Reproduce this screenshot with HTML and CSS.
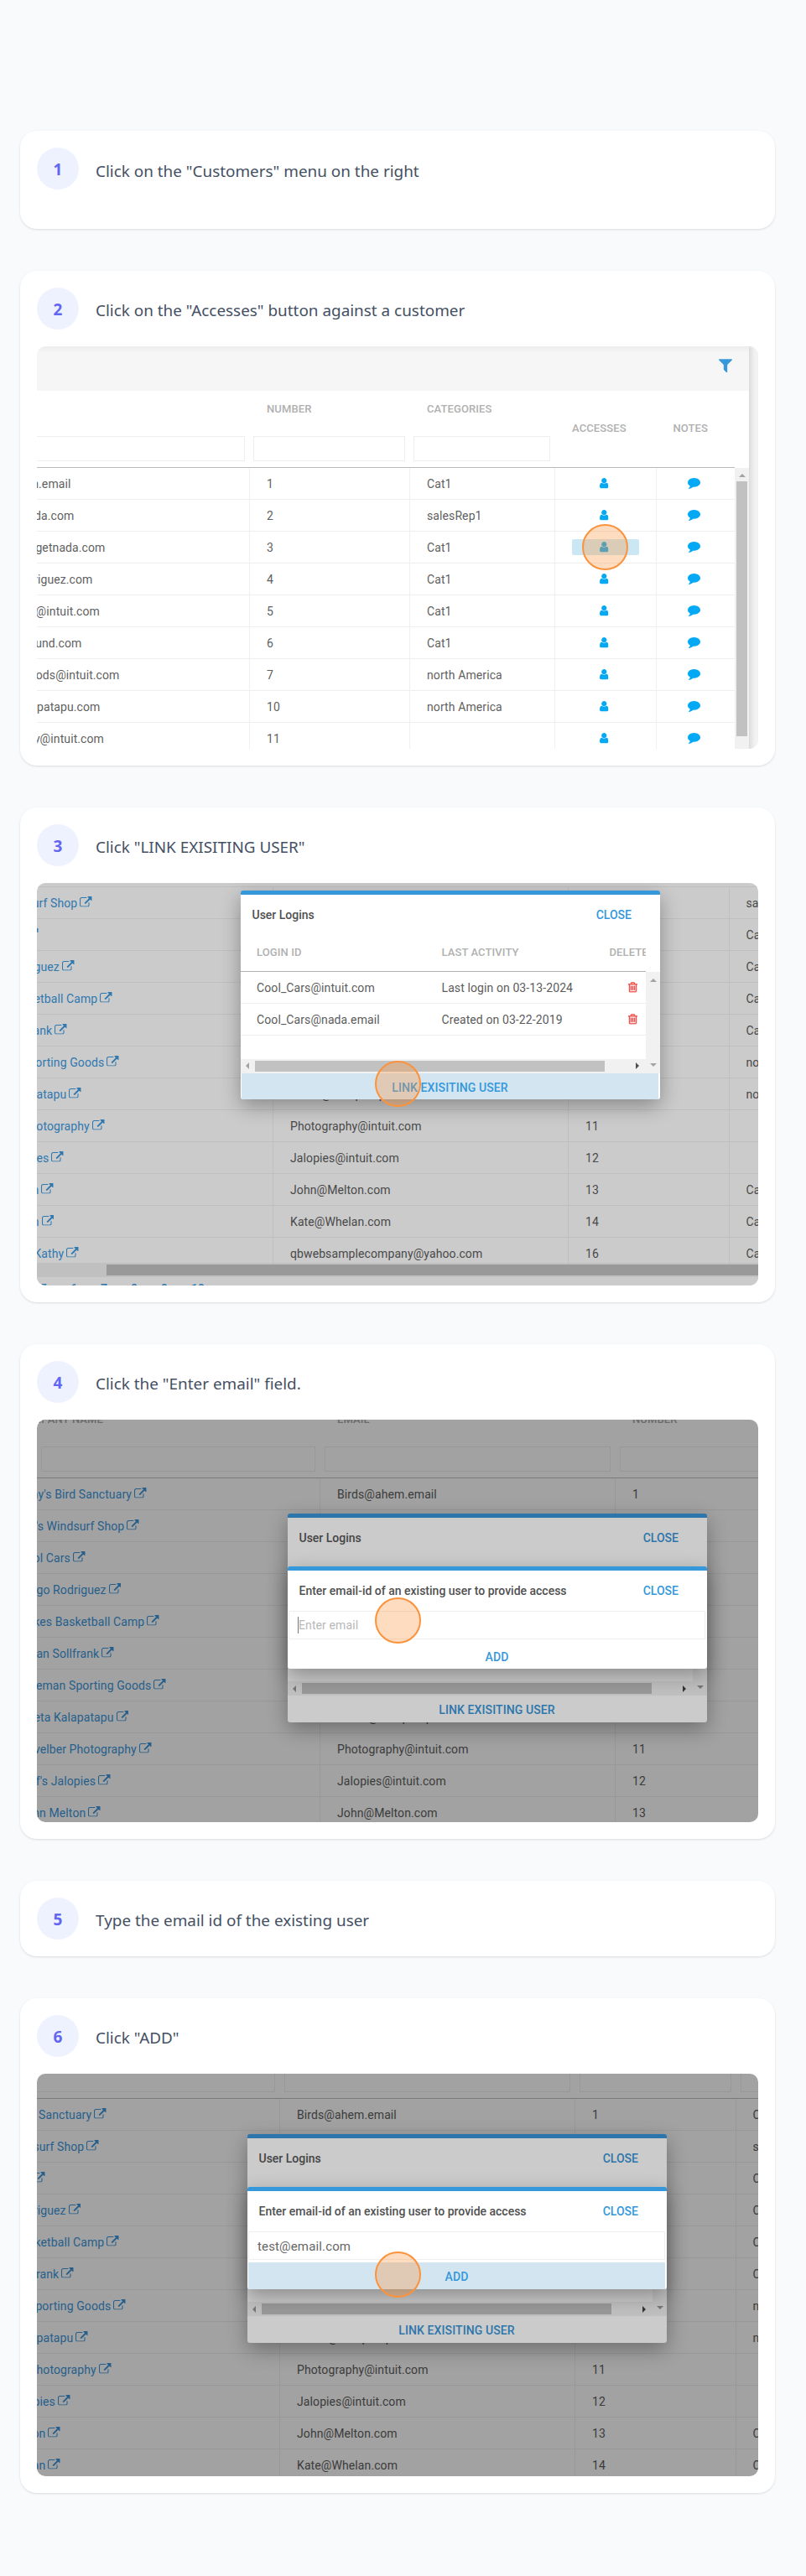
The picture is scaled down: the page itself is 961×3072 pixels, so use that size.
FILE: index.html
```html
<!DOCTYPE html>
<html lang="en">
<head>
<meta charset="utf-8">
<title>Link an existing user to a customer</title>
<link rel="stylesheet" href="styles.css">
</head>
<body>
<svg class="sprite" aria-hidden="true">
  <symbol id="link" viewBox="0 0 1792 1536"><path d="M1408 928v320q0 119-84.5 203.5t-203.5 84.5h-832q-119 0-203.5-84.5t-84.5-203.5v-832q0-119 84.5-203.5t203.5-84.5h704q14 0 23 9t9 23v64q0 14-9 23t-23 9h-704q-66 0-113 47t-47 113v832q0 66 47 113t113 47h832q66 0 113-47t47-113v-320q0-14 9-23t23-9h64q14 0 23 9t9 23zm384-864v512q0 26-19 45t-45 19-45-19l-176-176-652 652q-10 10-23 10t-23-10l-114-114q-10-10-10-23t10-23l652-652-176-176q-19-19-19-45t19-45 45-19h512q26 0 45 19t19 45z"/></symbol>
  <symbol id="user" viewBox="256 128 1280 1536"><path d="M1536 1399q0 109-62.5 187t-150.5 78h-854q-88 0-150.5-78t-62.5-187q0-85 8.5-160.5t31.5-152 58.5-131 94-89 134.5-34.5q131 128 313 128t313-128q76 0 134.5 34.5t94 89 58.5 131 31.5 152 8.5 160.5zm-256-887q0 159-112.5 271.5t-271.5 112.5-271.5-112.5-112.5-271.5 112.5-271.5 271.5-112.5 271.5 112.5 112.5 271.5z"/></symbol>
  <symbol id="comment" viewBox="0 256 1792 1536"><path d="M1792 896q0 174-120 321.5t-326 233-450 85.5q-70 0-145-8-198 175-460 242-49 14-114 22-17 2-30.5-9t-17.5-29v-1q-3-4-.5-12t2-10 4.5-9.5l6-9 7-8.5 8-9q7-8 31-34.5t34.5-38 31-39.5 32.5-51 27-59 26-76q-157-89-247.5-220t-90.5-281q0-174 120-321.5t326-233 450-85.5 450 85.5 326 233 120 321.5z"/></symbol>
  <symbol id="filter" viewBox="190 256 1412 1408"><path d="M1595 295q17 41-14 70l-493 493v742q0 42-39 59-13 5-25 5-27 0-45-19l-256-256q-19-19-19-45v-486l-493-493q-31-29-14-70 17-39 59-39h1280q42 0 59 39z"/></symbol>
  <symbol id="trash" viewBox="192 128 1408 1536"><path d="M704 736v576q0 14-9 23t-23 9h-64q-14 0-23-9t-9-23v-576q0-14 9-23t23-9h64q14 0 23 9t9 23zm256 0v576q0 14-9 23t-23 9h-64q-14 0-23-9t-9-23v-576q0-14 9-23t23-9h64q14 0 23 9t9 23zm256 0v576q0 14-9 23t-23 9h-64q-14 0-23-9t-9-23v-576q0-14 9-23t23-9h64q14 0 23 9t9 23zm128 724v-948h-896v948q0 22 7 40.5t14.5 27 10.5 8.5h832q3 0 10.5-8.5t14.5-27 7-40.5zm-672-1076h448l-48-117q-7-9-17-11h-317q-10 2-17 11zm928 32v64q0 14-9 23t-23 9h-96v948q0 83-47 143.5t-113 60.5h-832q-66 0-113-58.5t-47-141.5v-952h-96q-14 0-23-9t-9-23v-64q0-14 9-23t23-9h309l70-167q15-37 54-63t79-26h320q40 0 79 26t54 63l70 167h309q14 0 23 9t9 23z"/></symbol>
</svg>

<main class="steps">
  <section class="card card-tall">
    <header class="step"><span class="num">1</span><h2>Click on the "Customers" menu on the right</h2></header>
  </section>

  <section class="card">
    <header class="step"><span class="num">2</span><h2>Click on the "Accesses" button against a customer</h2></header>
    <div class="shot access">
      <div class="panel">
        <div class="toolbar"><svg class="i-filter"><use href="#filter"/></svg></div>
        <div class="a-head">
          <div class="hc"><b></b><i></i></div>
          <div class="hc"><b>NUMBER</b><i></i></div>
          <div class="hc"><b>CATEGORIES</b><i></i></div>
          <div class="hc mid"><b>ACCESSES</b></div>
          <div class="hc mid notes"><b>NOTES</b></div>
        </div>
        <div class="a-main">
          <div class="a-rows">
            <div class="ar"><span><em class="tail" style="width:40.5px">Birds@ahem.email</em></span><span>1</span><span>Cat1</span><span><svg class="i-user"><use href="#user"/></svg></span><span><svg class="i-comment"><use href="#comment"/></svg></span></div>
            <div class="ar"><span><em class="tail" style="width:44.5px">Surf@nada.com</em></span><span>2</span><span>salesRep1</span><span><svg class="i-user"><use href="#user"/></svg></span><span><svg class="i-comment"><use href="#comment"/></svg></span></div>
            <div class="ar"><span><em class="tail" style="width:81.5px">Cars@getnada.com</em></span><span>3</span><span>Cat1</span><span><svg class="i-user"><use href="#user"/></svg></span><span><svg class="i-comment"><use href="#comment"/></svg></span></div>
            <div class="ar"><span><em class="tail" style="width:66.5px">Diego@Rodriguez.com</em></span><span>4</span><span>Cat1</span><span><svg class="i-user"><use href="#user"/></svg></span><span><svg class="i-comment"><use href="#comment"/></svg></span></div>
            <div class="ar"><span><em class="tail" style="width:75px">Dukes@intuit.com</em></span><span>5</span><span>Cat1</span><span><svg class="i-user"><use href="#user"/></svg></span><span><svg class="i-comment"><use href="#comment"/></svg></span></div>
            <div class="ar"><span><em class="tail" style="width:53.5px">Dylan@Sound.com</em></span><span>6</span><span>Cat1</span><span><svg class="i-user"><use href="#user"/></svg></span><span><svg class="i-comment"><use href="#comment"/></svg></span></div>
            <div class="ar"><span><em class="tail" style="width:98.5px">Goods@intuit.com</em></span><span>7</span><span>north America</span><span><svg class="i-user"><use href="#user"/></svg></span><span><svg class="i-comment"><use href="#comment"/></svg></span></div>
            <div class="ar"><span><em class="tail" style="width:75.5px">Geeta@Kalapatapu.com</em></span><span>10</span><span>north America</span><span><svg class="i-user"><use href="#user"/></svg></span><span><svg class="i-comment"><use href="#comment"/></svg></span></div>
            <div class="ar"><span><em class="tail" style="width:80px">Photography@intuit.com</em></span><span>11</span><span></span><span><svg class="i-user"><use href="#user"/></svg></span><span><svg class="i-comment"><use href="#comment"/></svg></span></div>
          </div>
          <div class="a-scroll"><span class="up"></span><span class="thumb"></span></div>
        </div>
      </div>
      <div class="edge"></div>
      <div class="glow"></div>
      <div class="click click-a"></div>
    </div>
  </section>

  <section class="card">
    <header class="step"><span class="num">3</span><h2>Click "LINK EXISITING USER"</h2></header>
    <div class="shot dim1">
      <div class="table table3">
        <div class="r"><span><a style="width:122px">Bill's Windsurf Shop<svg><use href="#link"/></svg></a></span><span></span><span></span><span>salesRep1</span></div>
        <div class="r"><span><a style="width:57.7px">Cool Cars<svg><use href="#link"/></svg></a></span><span></span><span></span><span>Cat1</span></div>
        <div class="r"><span><a style="width:100.5px">Diego Rodriguez<svg><use href="#link"/></svg></a></span><span></span><span></span><span>Cat1</span></div>
        <div class="r"><span><a style="width:146px">Dukes Basketball Camp<svg><use href="#link"/></svg></a></span><span></span><span></span><span>Cat1</span></div>
        <div class="r"><span><a style="width:92px">Dylan Sollfrank<svg><use href="#link"/></svg></a></span><span></span><span></span><span>Cat1</span></div>
        <div class="r"><span><a style="width:154px">Freeman Sporting Goods<svg><use href="#link"/></svg></a></span><span></span><span></span><span>north America</span></div>
        <div class="r"><span><a style="width:109px">Geeta Kalapatapu<svg><use href="#link"/></svg></a></span><span>Geeta@Kalapatapu.com</span><span></span><span>north America</span></div>
        <div class="r"><span><a style="width:136.5px">Gevelber Photography<svg><use href="#link"/></svg></a></span><span>Photography@intuit.com</span><span>11</span><span></span></div>
        <div class="r"><span><a style="width:88px">Jeff's Jalopies<svg><use href="#link"/></svg></a></span><span>Jalopies@intuit.com</span><span>12</span><span></span></div>
        <div class="r"><span><a style="width:76px">John Melton<svg><use href="#link"/></svg></a></span><span>John@Melton.com</span><span>13</span><span>Cat1</span></div>
        <div class="r"><span><a style="width:76.2px">Kate Whelan<svg><use href="#link"/></svg></a></span><span>Kate@Whelan.com</span><span>14</span><span>Cat1</span></div>
        <div class="r"><span><a style="width:106px">Kookies by Kathy<svg><use href="#link"/></svg></a></span><span>qbwebsamplecompany@yahoo.com</span><span>16</span><span>Cat1</span></div>
      </div>
      <div class="pager"><div class="track"><div></div></div><p><span>5</span><span>6</span><span>7</span><span>8</span><span>9</span><span>10</span></p></div>
      <div class="modal modal3">
        <div class="m-title"><strong>User Logins</strong><b>CLOSE</b></div>
        <div class="m-head"><b>LOGIN ID</b><b>LAST ACTIVITY</b><b>DELETE</b></div>
        <div class="m-body">
          <div class="m-left">
            <div class="mr"><span>Cool_Cars@intuit.com</span><span>Last login on 03-13-2024</span><svg><use href="#trash"/></svg></div>
            <div class="mr"><span>Cool_Cars@nada.email</span><span>Created on 03-22-2019</span><svg><use href="#trash"/></svg></div>
            <div class="hscroll"><i class="lt"></i><i class="bar"></i><i class="rt"></i></div>
          </div>
          <div class="vscroll"><i class="up"></i><i class="dn"></i></div>
        </div>
        <div class="m-btn lit">LINK EXISITING USER</div>
      </div>
      <div class="click click-b"></div>
    </div>
  </section>

  <section class="card">
    <header class="step"><span class="num">4</span><h2>Click the "Enter email" field.</h2></header>
    <div class="shot dim2">
      <div class="table table4">
        <div class="t-head"><div><b class="co">COMPANY NAME</b><i></i></div><div><b>EMAIL</b><i></i></div><div><b>NUMBER</b><i></i></div><div><b></b><i></i></div></div>
        <div class="r"><span><a style="width:130.8px">Amy's Bird Sanctuary<svg><use href="#link"/></svg></a></span><span>Birds@ahem.email</span><span>1</span><span></span></div>
        <div class="r"><span><a style="width:122px">Bill's Windsurf Shop<svg><use href="#link"/></svg></a></span><span></span><span></span><span></span></div>
        <div class="r"><span><a style="width:57.5px">Cool Cars<svg><use href="#link"/></svg></a></span><span></span><span></span><span></span></div>
        <div class="r"><span><a style="width:100.3px">Diego Rodriguez<svg><use href="#link"/></svg></a></span><span></span><span></span><span></span></div>
        <div class="r"><span><a style="width:146px">Dukes Basketball Camp<svg><use href="#link"/></svg></a></span><span></span><span></span><span></span></div>
        <div class="r"><span><a style="width:92px">Dylan Sollfrank<svg><use href="#link"/></svg></a></span><span></span><span></span><span></span></div>
        <div class="r"><span><a style="width:154px">Freeman Sporting Goods<svg><use href="#link"/></svg></a></span><span></span><span></span><span></span></div>
        <div class="r"><span><a style="width:109.3px">Geeta Kalapatapu<svg><use href="#link"/></svg></a></span><span>Geeta@Kalapatapu.com</span><span></span><span></span></div>
        <div class="r"><span><a style="width:136.5px">Gevelber Photography<svg><use href="#link"/></svg></a></span><span>Photography@intuit.com</span><span>11</span><span></span></div>
        <div class="r"><span><a style="width:87.8px">Jeff's Jalopies<svg><use href="#link"/></svg></a></span><span>Jalopies@intuit.com</span><span>12</span><span></span></div>
        <div class="r"><span><a style="width:76px">John Melton<svg><use href="#link"/></svg></a></span><span>John@Melton.com</span><span>13</span><span></span></div>
      </div>
      <div class="modal modal4 under">
        <div class="m-title"><strong>User Logins</strong><b>CLOSE</b></div>
        <div class="m-body m-tail">
          <div class="m-left"><div class="hscroll"><i class="lt"></i><i class="bar"></i><i class="rt"></i></div></div>
          <div class="vscroll"><i class="dn"></i></div>
        </div>
        <div class="m-btn">LINK EXISITING USER</div>
      </div>
      <div class="modal dialog4 dialog">
        <div class="m-title"><strong>Enter email-id of an existing user to provide access</strong><b>CLOSE</b></div>
        <div class="field"><span class="ph">Enter email</span></div>
        <div class="m-btn">ADD</div>
      </div>
      <div class="click click-c"></div>
    </div>
  </section>

  <section class="card">
    <header class="step"><span class="num">5</span><h2>Type the email id of the existing user</h2></header>
  </section>

  <section class="card">
    <header class="step"><span class="num">6</span><h2>Click "ADD"</h2></header>
    <div class="shot dim2">
      <div class="table table6">
        <div class="t-head"><div><b></b><i></i></div><div><b></b><i></i></div><div><b></b><i></i></div><div><b></b><i></i></div></div>
        <div class="r"><span><a style="width:131px">Amy's Bird Sanctuary<svg><use href="#link"/></svg></a></span><span>Birds@ahem.email</span><span>1</span><span>Cat1</span></div>
        <div class="r"><span><a style="width:122px">Bill's Windsurf Shop<svg><use href="#link"/></svg></a></span><span></span><span></span><span>salesRep1</span></div>
        <div class="r"><span><a style="width:57.5px">Cool Cars<svg><use href="#link"/></svg></a></span><span></span><span></span><span>Cat1</span></div>
        <div class="r"><span><a style="width:100.3px">Diego Rodriguez<svg><use href="#link"/></svg></a></span><span></span><span></span><span>Cat1</span></div>
        <div class="r"><span><a style="width:146px">Dukes Basketball Camp<svg><use href="#link"/></svg></a></span><span></span><span></span><span>Cat1</span></div>
        <div class="r"><span><a style="width:92px">Dylan Sollfrank<svg><use href="#link"/></svg></a></span><span></span><span></span><span>Cat1</span></div>
        <div class="r"><span><a style="width:154px">Freeman Sporting Goods<svg><use href="#link"/></svg></a></span><span></span><span></span><span>north America</span></div>
        <div class="r"><span><a style="width:109px">Geeta Kalapatapu<svg><use href="#link"/></svg></a></span><span>Geeta@Kalapatapu.com</span><span></span><span>north America</span></div>
        <div class="r"><span><a style="width:136.5px">Gevelber Photography<svg><use href="#link"/></svg></a></span><span>Photography@intuit.com</span><span>11</span><span></span></div>
        <div class="r"><span><a style="width:87.5px">Jeff's Jalopies<svg><use href="#link"/></svg></a></span><span>Jalopies@intuit.com</span><span>12</span><span></span></div>
        <div class="r"><span><a style="width:76px">John Melton<svg><use href="#link"/></svg></a></span><span>John@Melton.com</span><span>13</span><span>Cat1</span></div>
        <div class="r"><span><a style="width:76px">Kate Whelan<svg><use href="#link"/></svg></a></span><span>Kate@Whelan.com</span><span>14</span><span>Cat1</span></div>
      </div>
      <div class="modal modal6 under">
        <div class="m-title"><strong>User Logins</strong><b>CLOSE</b></div>
        <div class="m-body m-tail">
          <div class="m-left"><div class="hscroll"><i class="lt"></i><i class="bar"></i><i class="rt"></i></div></div>
          <div class="vscroll"><i class="dn"></i></div>
        </div>
        <div class="m-btn">LINK EXISITING USER</div>
      </div>
      <div class="modal dialog6 dialog">
        <div class="m-title"><strong>Enter email-id of an existing user to provide access</strong><b>CLOSE</b></div>
        <div class="field"><span class="val">test@email.com</span></div>
        <div class="m-btn lit">ADD</div>
      </div>
      <div class="click click-d"></div>
    </div>
  </section>
</main>
</body>
</html>
```
FILE: styles.css
```css
* { box-sizing: border-box; }
body { margin: 0; background: #f8fafc; font-family: Roboto, "Liberation Sans", sans-serif; }
.sprite { display: none; }
svg { fill: currentColor; flex: none; }

/* Step cards */
.steps { width: 900px; height: 3072px; margin-left: 24px; padding-top: 156px; display: flex; flex-direction: column; gap: 50px; }
.card { background: #fff; border-radius: 20px; padding: 20px; flex: none; display: flex; flex-direction: column; gap: 20px;
  box-shadow: 0 1px 3px rgba(0,0,0,.1), 0 1px 2px -1px rgba(0,0,0,.1); }
.card-tall { height: 117px; }
.step { display: flex; align-items: center; gap: 20px; height: 50px; }
.num { width: 50px; height: 50px; border-radius: 50%; background: #eef2ff; color: #6366f1; display: flex; align-items: center; justify-content: center;
  font: 700 19px/1 "Noto Sans", sans-serif; padding-top: 2px; }
.step h2 { margin: 0; padding-top: 4px; font: 400 18.9px/26px "Noto Sans", sans-serif; color: #445063; white-space: nowrap; }
.card-tall h2 { padding-top: 6px; }

/* Screens */
.shot { position: relative; width: 860px; height: 480px; border-radius: 10px; overflow: hidden; font-size: 14px; letter-spacing: .1px; color: #5c5c5c; white-space: nowrap; }
.click { position: absolute; width: 55px; height: 55px; border-radius: 50%; border: 2px solid #fb923c; background: rgba(251,146,60,.32); }
.tail { display: flex; justify-content: flex-end; font-style: normal; }

/* Customer access list */
.access { display: flex; background: #fff; }
.panel { width: 849px; display: flex; flex-direction: column; }
.edge { width: 11px; background: linear-gradient(90deg, #dcdcdc, #f2f2f2 7px); }
.toolbar { height: 53px; background: linear-gradient(#ececec, #f6f6f6 8px); display: flex; justify-content: flex-end; padding: 15px 20px 0 0; color: #3498db; }
.i-filter { width: 16px; height: 16.5px; }
.a-head { height: 92px; display: grid; grid-template-columns: 254px 191px 173px 120.5px 110.5px; border-bottom: 1px solid #bbb; margin-right: 17px; }
.hc { display: flex; flex-direction: column; padding: 14px 6px 0 4px; }
.hc b { height: 16px; line-height: 16px; padding-left: 16px; font-size: 13px; font-weight: 500; color: #b0b0b0; }
.hc i { height: 30px; margin-top: 23.5px; border: 1px solid #eee; }
.hc:first-child { padding-left: 0; }
.hc:first-child i { border-left: 0; }
.hc.mid { padding-top: 37px; }
.a-main { display: flex; height: 335px; }
.a-rows { width: 832px; overflow: hidden; }
.ar { height: 38px; display: grid; grid-template-columns: 254px 191px 173px 120.5px 93.5px; border-bottom: 1px solid #eee; }
.ar > span { display: flex; align-items: center; border-right: 1px solid #f0f0f0; padding: 0 0 0 20px; color: #5f5f5f; }
.ar > span:first-child { padding-left: 0; }
.ar > span:nth-child(4) { padding-left: 53px; color: #03a9f4; }
.ar > span:nth-child(5) { padding-left: 37px; color: #03a9f4; border-right: 0; }
.i-user { width: 10.5px; height: 12.5px; }
.i-comment { width: 15px; height: 13px; }
.a-scroll { width: 17px; background: #f1f1f1; display: flex; flex-direction: column; align-items: center; }
.a-scroll .up { margin: 7px 0 5px; }
.a-scroll .thumb { width: 13px; height: 303.5px; background: #c1c1c1; }
.glow { position: absolute; left: 638px; top: 229.5px; width: 80px; height: 19px; border-radius: 2px; background: rgba(52,160,211,.25); }
.click-a { left: 650px; top: 212px; }

/* Dimmed customer table */
.dim1 { background: #cbcbcb; --line: #bfbfbf; --text: #494949; --link: #2f78b0; }
.dim2 { background: #a2a2a2; --line: #989898; --text: #3b3b3b; --link: #265f8c; }
.table { width: 1080px; display: flex; flex-direction: column; }
.table3 { margin: 4px 0 0 -56px; border-top: 1px solid var(--line); }
.table6 { margin: -40px 0 0 -48px; }
.r, .t-head { display: grid; grid-template-columns: 338px 352px 191.5px 198.5px; }
.r { height: 38px; border-bottom: 1px solid var(--line); flex: none; }
.r > span { display: flex; align-items: center; padding-left: 20px; border-right: 1px solid var(--line); color: var(--text); }
.r > span:first-child { padding-left: 0; }
.table a { display: flex; justify-content: flex-end; align-items: center; gap: 3px; color: var(--link); }
.table a svg { width: 14.7px; height: 12.6px; margin-top: -2px; }
.t-head { height: 70px; border-bottom: 1px solid #7a7a7a; }
.t-head div { padding: 0 6px 0 5px; display: flex; flex-direction: column; }
.t-head b { height: 16px; margin-top: -8px; line-height: 16px; padding-left: 15px; font-size: 13px; font-weight: 500; color: #6c6c6c; }
.t-head i { height: 30px; margin-top: 23.5px; border: 1px solid var(--line); }
.t-head .co { padding: 0; width: 74px; display: flex; justify-content: flex-end; }
.pager { position: absolute; left: 0; top: 452.5px; width: 860px; height: 27.5px; background: #cbcbcb; }
.track { height: 17px; padding: 2px 0 2px 82.5px; background: #c0c0c0; }
.track div { height: 13px; background: #999; }
.pager p { margin: 6px 0 0 4px; display: flex; color: #2f78b0; font-size: 14px; font-weight: 500; line-height: 16px; }
.pager span { width: 36px; }

/* Dialogs */
.modal { position: absolute; width: 500px; background: #fff; border-top: 5px solid #3498db; border-radius: 3px; display: flex; flex-direction: column;
  box-shadow: 0 8px 24px rgba(0,0,0,.32); --bar: #c1c1c1; --track: #f1f1f1; }
.under { background: #cbcbcb; border-color: #2d76ab; color: #2a76b0; --bar: #999; --track: #c0c0c0; }
.modal3 { left: 243px; top: 9px; height: 248.5px; }
.modal4 { left: 299px; top: 112px; height: 248.5px; }
.modal6 { left: 251px; top: 72px; height: 248.5px; }
.dialog4 { left: 299px; top: 175px; height: 122px; }
.dialog6 { left: 251px; top: 135px; height: 121.5px; }
.m-title { height: 48px; padding: 0 34px 0 13.5px; display: flex; align-items: center; justify-content: space-between; font-size: 14px; letter-spacing: 0; }
.m-title strong { font-weight: 500; color: #505050; }
.m-title b { font-weight: 500; color: #3498db; }
.under .m-title b, .under .m-btn { color: #2d76ab; }
.under .m-title strong { color: #454545; }
.m-head { height: 43.5px; width: 483px; overflow: hidden; border-bottom: 1px solid #b0b0b0; display: grid; grid-template-columns: 220.5px 200px 80px; padding: 12px 0 0 19px; font-size: 13px; color: #b0b0b0; }
.m-head b { font-weight: 500; line-height: 17px; }
.m-body { display: flex; height: 121px; }
.m-tail { margin-top: 48px; height: 116px; padding-top: 0; }
.m-left { width: 483px; display: flex; flex-direction: column; }
.mr { height: 38px; display: grid; grid-template-columns: 220.5px 222.5px 11px; align-items: center; padding: 1px 0 0 19px; border-bottom: 1px solid #eee; }
.mr svg { width: 11px; height: 12.7px; color: #ef5350; stroke: #ef5350; stroke-width: 60px; }
.hscroll { margin-top: auto; height: 17px; background: var(--track); display: flex; align-items: center; }
.hscroll .bar { width: 417px; height: 13px; background: var(--bar); margin: 0 37px 0 7px; }
.vscroll { width: 17px; background: var(--track); display: flex; flex-direction: column; align-items: center; padding: 8px 0; }
.up, .dn, .lt, .rt { width: 0; height: 0; border: 4px solid transparent; }
.up { border-top: 0; border-bottom-color: #a3a3a3; }
.dn { border-bottom: 0; border-top-color: #a3a3a3; margin-top: auto; }
.lt { border-left: 0; border-right-color: #a3a3a3; margin-left: 6px; }
.rt { border-right: 0; border-left-color: #505050; }
.under .dn { border-top-color: #777; }
.under .lt { border-right-color: #777; }
.under .rt { border-left-color: #333; }
.m-btn { flex: 1; margin: 0 2px 0 1px; display: flex; align-items: center; justify-content: center; padding-top: 3px; font-size: 14px; font-weight: 500; color: #3498db; }
.lit { background: #d3e5f1; }
.field { height: 34px; margin: 0 2px 3px 1px; border: 1px solid #eee; display: flex; align-items: center; flex: none; }
.ph { border-left: 1px solid #777; line-height: 20px; margin-left: 10px; color: #b8b8b8; font-size: 14px; }
.val { margin-left: 10px; font-size: 15px; letter-spacing: .15px; padding-top: 2px; color: #666; }
.click-b, .click-c, .click-d { left: 403px; top: 212px; }
```
